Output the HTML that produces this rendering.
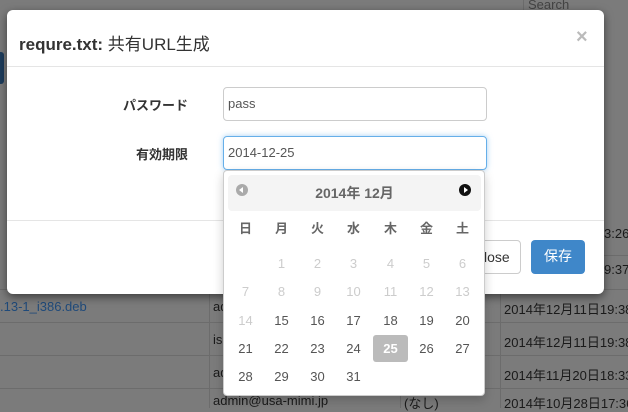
<!DOCTYPE html>
<html><head><meta charset="utf-8"><style>
*{box-sizing:border-box;margin:0;padding:0}
body{width:628px;height:408px;overflow:hidden;background:#7b7b7b;font-family:"Liberation Sans","Noto Sans CJK JP",sans-serif;position:relative;color:#333}
.abs{position:absolute}
.hl{position:absolute;height:1px;background:#6c6c6c}
.vl{position:absolute;width:1px;background:#6c6c6c}
.bt{position:absolute;font-size:13px;color:#1a1a1a;white-space:nowrap}
.modal{position:absolute;left:7px;top:10px;width:597px;height:284px;background:#fff;border-radius:6px;box-shadow:0 3px 9px rgba(0,0,0,.5)}
.lbl{position:absolute;font-size:13px;font-weight:bold;color:#333}
.inp{position:absolute;left:216px;width:264px;height:34px;border:1px solid #ccc;border-radius:4px;font-size:13px;color:#555;padding:8px 4px;line-height:16px}
.dp{position:absolute;left:223px;top:170px;width:262px;height:226px;background:#fff;border:1px solid #ccc;border-radius:4px;box-shadow:0 4px 10px rgba(0,0,0,.2)}
.dh{position:absolute;left:4px;top:4px;width:253px;height:36px;background:#f4f4f4;border-radius:4px;text-align:center;font-size:14px;font-weight:bold;color:#666;line-height:37px}
.c{position:absolute;width:35px;height:27px;text-align:center;line-height:28px;font-size:13px;color:#555;border-radius:3px}
.m{color:#ccc}
.w{font-weight:bold;color:#666}
</style></head><body>
<div class="abs" style="left:0;top:52px;width:4px;height:32px;background:#1d3c5c;border-radius:0 3px 3px 0"></div>
<div class="abs" style="left:523px;top:0;width:1px;height:22px;background:#6c6c6c"></div>
<div class="bt" style="left:528px;top:-3px;color:#444">Search</div>
<div class="hl" style="left:0;top:289px;width:628px"></div>
<div class="hl" style="left:0;top:322px;width:628px"></div>
<div class="hl" style="left:0;top:355px;width:628px"></div>
<div class="hl" style="left:0;top:388px;width:628px"></div>
<div class="hl" style="left:604px;top:255px;width:24px"></div>
<div class="vl" style="left:209px;top:290px;height:118px"></div>
<div class="vl" style="left:400px;top:290px;height:118px"></div>
<div class="vl" style="left:500px;top:220px;height:188px"></div>
<div class="bt" style="left:0;top:299px;color:#1f4a7a">.13-1_i386.deb</div>
<div class="bt" style="left:213px;top:299px">ad</div>
<div class="bt" style="left:213px;top:332px">is</div>
<div class="bt" style="left:213px;top:365px">ad</div>
<div class="bt" style="left:213px;top:393px">admin@usa-mimi.jp</div>
<div class="bt" style="left:404px;top:393px">(なし)</div>
<div class="bt" style="left:504px;top:299px">2014年12月11日19:38:</div>
<div class="bt" style="left:504px;top:332px">2014年12月11日19:38:</div>
<div class="bt" style="left:504px;top:365px">2014年11月20日18:33:</div>
<div class="bt" style="left:504px;top:393px">2014年10月28日17:36:</div>
<div class="bt" style="left:604px;top:226px">3:26:</div>
<div class="bt" style="left:604px;top:262px">9:37:</div>
<div class="modal">
<div class="abs" style="left:12px;top:20px;font-size:17px;font-weight:bold;color:#333">requre.txt: <span style="font-weight:normal">共有URL生成</span></div>
<div class="abs" style="left:569px;top:16px;font-size:20px;font-weight:bold;color:#bbb">×</div>
<div class="abs" style="left:0;top:56px;width:597px;height:1px;background:#e5e5e5"></div>
<div class="lbl" style="left:116px;top:85px">パスワード</div>
<div class="inp" style="top:77px">pass</div>
<div class="lbl" style="left:129px;top:134px">有効期限</div>
<div class="inp" style="top:126px;border-color:#66afe9;box-shadow:0 0 6px rgba(102,175,233,.6)">2014-12-25</div>
<div class="abs" style="left:0;top:210px;width:597px;height:1px;background:#e5e5e5"></div>
<div class="abs" style="left:440px;top:230px;width:74px;height:34px;border:1px solid #ccc;border-radius:4px;font-size:14px;line-height:32px;padding-left:36px">lose</div>
<div class="abs" style="left:524px;top:230px;width:54px;height:34px;background:#3f87c9;border-radius:4px;color:#fff;font-size:14px;line-height:33px;text-align:center">保存</div>
</div>
<div class="dp">
<div class="dh">2014年 12月</div>
<div class="abs" style="left:12px;top:13px;width:12px;height:12px;border-radius:50%;background:#aaa"><div class="abs" style="left:3px;top:3px;border-right:4px solid #fff;border-top:3px solid transparent;border-bottom:3px solid transparent"></div></div>
<div class="abs" style="left:235px;top:13px;width:12px;height:12px;border-radius:50%;background:#111"><div class="abs" style="left:5px;top:3px;border-left:4px solid #fff;border-top:3px solid transparent;border-bottom:3px solid transparent"></div></div>
<div class="c w" style="left:4px;top:44px">日</div><div class="c w" style="left:40px;top:44px">月</div><div class="c w" style="left:76px;top:44px">火</div><div class="c w" style="left:112px;top:44px">水</div><div class="c w" style="left:149px;top:44px">木</div><div class="c w" style="left:185px;top:44px">金</div><div class="c w" style="left:221px;top:44px">土</div>
<div class="c m" style="left:40px;top:79px">1</div><div class="c m" style="left:76px;top:79px">2</div><div class="c m" style="left:112px;top:79px">3</div><div class="c m" style="left:149px;top:79px">4</div><div class="c m" style="left:185px;top:79px">5</div><div class="c m" style="left:221px;top:79px">6</div>
<div class="c m" style="left:4px;top:107px">7</div><div class="c m" style="left:40px;top:107px">8</div><div class="c m" style="left:76px;top:107px">9</div><div class="c m" style="left:112px;top:107px">10</div><div class="c m" style="left:149px;top:107px">11</div><div class="c m" style="left:185px;top:107px">12</div><div class="c m" style="left:221px;top:107px">13</div>
<div class="c m" style="left:4px;top:136px">14</div><div class="c" style="left:40px;top:136px">15</div><div class="c" style="left:76px;top:136px">16</div><div class="c" style="left:112px;top:136px">17</div><div class="c" style="left:149px;top:136px">18</div><div class="c" style="left:185px;top:136px">19</div><div class="c" style="left:221px;top:136px">20</div>
<div class="c" style="left:4px;top:164px">21</div><div class="c" style="left:40px;top:164px">22</div><div class="c" style="left:76px;top:164px">23</div><div class="c" style="left:112px;top:164px">24</div><div class="c" style="left:149px;top:164px;background:#bbb;color:#fff;font-weight:bold">25</div><div class="c" style="left:185px;top:164px">26</div><div class="c" style="left:221px;top:164px">27</div>
<div class="c" style="left:4px;top:192px">28</div><div class="c" style="left:40px;top:192px">29</div><div class="c" style="left:76px;top:192px">30</div><div class="c" style="left:112px;top:192px">31</div>
</div>
</body></html>
